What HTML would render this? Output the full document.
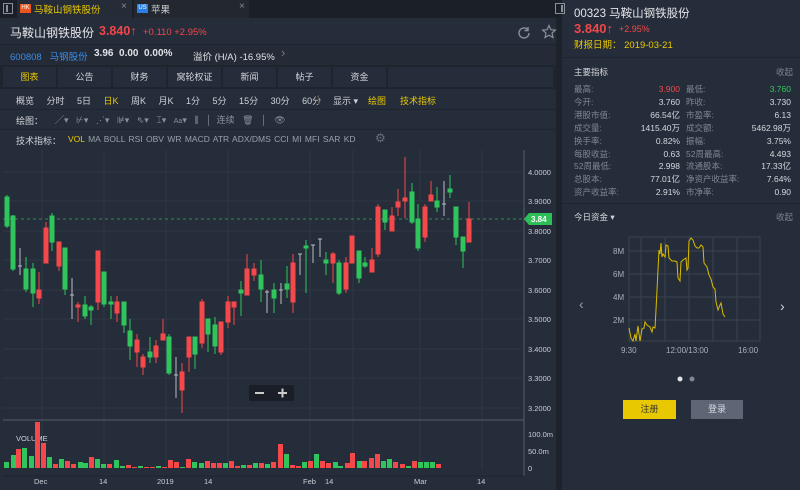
<!DOCTYPE html>
<html><head><meta charset="utf-8"><style>
*{margin:0;padding:0;box-sizing:border-box}
body{width:800px;height:490px;background:#1d222b;font-family:"Liberation Sans","Noto Sans CJK SC",sans-serif;color:#c8ccd4;position:relative;overflow:hidden;font-size:9px}
.a{position:absolute;white-space:nowrap}
.y{color:#e8c800}
.r{color:#f0474a}
.g{color:#34c85a}
.nav div{position:absolute;top:67px;height:20px;background:#262d3a;line-height:20px;text-align:center;font-size:9px;color:#d0d4da}
.rt{font-size:8.5px;color:#7e8593}
.rv{font-size:8.5px;color:#d4d8de;text-align:right}
</style></head><body>
<!-- tab bar -->
<div class="a" style="left:0;top:0;width:800px;height:18px;background:#1b1f27"></div>
<div class="a" style="left:3px;top:3px;width:10px;height:11px;border:1px solid #8a909a"></div>
<div class="a" style="left:6px;top:5px;width:2px;height:7px;background:#8a909a"></div>
<div class="a" style="left:17px;top:0;width:115px;height:18px;background:#262c37"></div>
<div class="a" style="left:20px;top:4px;width:11px;height:9px;background:#e8551e;font-size:6px;color:#fff;line-height:9px;text-align:center">HK</div>
<div class="a y" style="left:34px;top:2px;font-size:9.5px">马鞍山钢铁股份</div>
<div class="a" style="left:121px;top:1px;font-size:10px;color:#888">×</div>
<div class="a" style="left:134px;top:0;width:115px;height:18px;background:#222730"></div>
<div class="a" style="left:137px;top:4px;width:11px;height:9px;background:#2a7fe0;font-size:6px;color:#fff;line-height:9px;text-align:center">US</div>
<div class="a" style="left:151px;top:2px;font-size:9.5px;color:#ccc">苹果</div>
<div class="a" style="left:239px;top:1px;font-size:10px;color:#888">×</div>

<!-- left panel -->
<div class="a" style="left:0;top:18px;width:556px;height:472px;background:#262d3a"></div>
<div class="a" style="left:0;top:44px;width:556px;height:1px;background:#1f252f"></div>
<div class="a" style="left:10px;top:24px;font-size:12px;color:#e4e6ea">马鞍山钢铁股份</div>
<div class="a r" style="left:99px;top:24px;font-size:12.5px;font-weight:bold">3.840↑</div>
<div class="a r" style="left:143px;top:27px;font-size:9.5px">+0.110 +2.95%</div>
<svg class="a" style="left:516px;top:25px" width="16" height="16" viewBox="0 0 16 16"><path d="M13 8a5 5 0 1 1-1.5-3.6" fill="none" stroke="#8a909a" stroke-width="1.4"/><path d="M12 2v3.5H8.5" fill="none" stroke="#8a909a" stroke-width="1.4"/></svg>
<svg class="a" style="left:541px;top:24px" width="16" height="16" viewBox="0 0 16 16"><path d="M8 1.5l1.9 4.2 4.5.4-3.4 3 1 4.4L8 11.2 4 13.5l1-4.4-3.4-3 4.5-.4z" fill="none" stroke="#8a909a" stroke-width="1.2"/></svg>
<div class="a" style="left:0;top:45px;width:556px;height:20px;background:#242a36"></div>
<div class="a" style="left:10px;top:49px;font-size:9.5px;color:#3a8fe8">600808 &nbsp; 马钢股份</div>
<div class="a" style="left:94px;top:48px;font-size:10px;color:#e0e2e6;font-weight:bold">3.96 &nbsp;0.00 &nbsp;0.00%</div>
<div class="a" style="left:193px;top:49px;font-size:9.5px;color:#e0e2e6">溢价 (H/A) -16.95%</div>
<div class="a" style="left:281px;top:45px;font-size:13px;color:#777">›</div>
<div class="a" style="left:0;top:65px;width:556px;height:24px;background:#1f252f"></div>
<div class="nav">
<div style="left:3px;width:53px;color:#e8c800">图表</div>
<div style="left:58px;width:53px">公告</div>
<div style="left:113px;width:53px">财务</div>
<div style="left:168px;width:53px">窝轮权证</div>
<div style="left:223px;width:53px">新闻</div>
<div style="left:278px;width:53px">帖子</div>
<div style="left:333px;width:53px">资金</div>
<div style="left:388px;width:165px"></div>
</div>
<div class="a" style="left:16px;top:94px;font-size:9px;color:#d0d4da;word-spacing:0">概览 &nbsp; &nbsp; 分时 &nbsp; &nbsp; 5日 &nbsp; &nbsp; <span class="y">日K</span> &nbsp; &nbsp; 周K &nbsp; &nbsp; 月K &nbsp; &nbsp; 1分 &nbsp; &nbsp; 5分 &nbsp; &nbsp; 15分 &nbsp; &nbsp; 30分 &nbsp; &nbsp; 60分</div>
<div class="a" style="left:318px;top:95px;width:1px;height:10px;background:#555"></div>
<div class="a" style="left:333px;top:94px;font-size:9px;color:#d0d4da">显示 ▾</div>
<div class="a y" style="left:368px;top:94px;font-size:9px">绘图</div>
<div class="a y" style="left:400px;top:94px;font-size:9px">技术指标</div>
<div class="a" style="left:0;top:109px;width:556px;height:1px;background:#1f252f"></div>
<div class="a" style="left:16px;top:114px;font-size:9px;color:#d0d4da">绘图：</div>
<div class="a" style="left:55px;top:113px;font-size:9px;color:#8a909a">╱▾ &nbsp; ⊬▾ &nbsp; ⋰▾ &nbsp; ⊯▾ &nbsp; ⇖▾ &nbsp; ⌶▾ &nbsp; <span style="font-size:7px">Aa</span>▾ &nbsp; ⫼ &nbsp; │ &nbsp;连续 &nbsp; 🗑 &nbsp; │ &nbsp; 👁</div>
<div class="a" style="left:0;top:129px;width:556px;height:1px;background:#1f252f"></div>
<div class="a" style="left:16px;top:134px;font-size:9px;color:#d0d4da">技术指标：</div>
<div class="a" style="left:68px;top:134px;font-size:8.5px;color:#9aa0aa;word-spacing:1px"><span class="y">VOL</span> MA BOLL RSI OBV WR MACD ATR ADX/DMS CCI MI MFI SAR KD</div>
<div class="a" style="left:375px;top:131px;font-size:12px;color:#6a707a">⚙</div>

<!-- chart -->
<svg class="a" style="left:0;top:0" width="556" height="490">
<g stroke="#2e3644" stroke-width="1">
<line x1="3" y1="172" x2="522" y2="172"/><line x1="3" y1="201" x2="522" y2="201"/><line x1="3" y1="231" x2="522" y2="231"/><line x1="3" y1="260" x2="522" y2="260"/><line x1="3" y1="290" x2="522" y2="290"/><line x1="3" y1="319" x2="522" y2="319"/><line x1="3" y1="349" x2="522" y2="349"/><line x1="3" y1="378" x2="522" y2="378"/><line x1="3" y1="408" x2="522" y2="408"/>
<line x1="42" y1="150" x2="42" y2="470"/><line x1="104" y1="150" x2="104" y2="470"/><line x1="166" y1="150" x2="166" y2="470"/><line x1="228" y1="150" x2="228" y2="470"/><line x1="310" y1="150" x2="310" y2="470"/><line x1="353" y1="150" x2="353" y2="470"/><line x1="420" y1="150" x2="420" y2="470"/><line x1="482" y1="150" x2="482" y2="470"/>
</g>
<line x1="3" y1="420" x2="524" y2="420" stroke="#565d6a"/>
<line x1="524" y1="150" x2="524" y2="476" stroke="#565d6a"/>
<line x1="3" y1="476" x2="524" y2="476" stroke="#1f252f"/>
<line x1="3" y1="219" x2="522" y2="219" stroke="#2e8c48" stroke-dasharray="3,3"/>
<g font-size="7.5" fill="#c8ccd4" font-family="Liberation Sans">
<text x="528" y="175">4.0000</text><text x="528" y="204">3.9000</text><text x="528" y="234">3.8000</text><text x="528" y="263">3.7000</text><text x="528" y="293">3.6000</text><text x="528" y="322">3.5000</text><text x="528" y="352">3.4000</text><text x="528" y="381">3.3000</text><text x="528" y="411">3.2000</text>
<text x="528" y="437">100.0m</text><text x="528" y="454">50.0m</text><text x="528" y="471">0</text>
<text x="34" y="484">Dec</text><text x="99" y="484">14</text><text x="157" y="484">2019</text><text x="204" y="484">14</text><text x="303" y="484">Feb</text><text x="325" y="484">14</text><text x="414" y="484">Mar</text><text x="477" y="484">14</text>
</g>
<path d="M524 219l5-6h23v12h-23z" fill="#2fbf58"/>
<text x="531" y="222" font-size="8" fill="#fff" font-weight="bold" font-family="Liberation Sans">3.84</text>
<rect x="249" y="385" width="45" height="16" rx="2" fill="#1a1e26"/>
<rect x="255" y="392" width="9" height="2" fill="#ccc"/><rect x="278" y="392" width="9" height="2" fill="#ccc"/><rect x="281.5" y="388.5" width="2" height="9" fill="#ccc"/>
<text x="16" y="441" font-size="7.5" fill="#d0d4da" font-family="Liberation Sans">VOLUME</text>
<g fill="#2fc55c" stroke="#2fc55c" stroke-width="1">
<line x1="7" y1="195" x2="7" y2="228"/><rect x="5" y="197" width="4" height="29"/>
<line x1="13" y1="215" x2="13" y2="271"/><rect x="11" y="216" width="4" height="53"/>
<line x1="26" y1="257" x2="26" y2="292"/><rect x="24" y="269" width="4" height="20"/>
<line x1="33" y1="263" x2="33" y2="307"/><rect x="31" y="269" width="4" height="24"/>
<line x1="52" y1="213" x2="52" y2="251"/><rect x="50" y="216" width="4" height="26"/>
<line x1="65" y1="248" x2="65" y2="295"/><rect x="63" y="248" width="4" height="41"/>
<line x1="85" y1="296" x2="85" y2="319"/><rect x="83" y="305" width="4" height="11"/>
<line x1="91" y1="305" x2="91" y2="325"/><rect x="89" y="307" width="4" height="3"/>
<line x1="104" y1="272" x2="104" y2="307"/><rect x="102" y="272" width="4" height="32"/>
<line x1="111" y1="296" x2="111" y2="319"/><rect x="109" y="302" width="4" height="2"/>
<line x1="124" y1="302" x2="124" y2="333"/><rect x="122" y="302" width="4" height="23"/>
<line x1="130" y1="319" x2="130" y2="360"/><rect x="128" y="331" width="4" height="15"/>
<line x1="150" y1="337" x2="150" y2="363"/><rect x="148" y="352" width="4" height="5"/>
<line x1="169" y1="334" x2="169" y2="375"/><rect x="167" y="337" width="4" height="36"/>
<line x1="195" y1="337" x2="195" y2="369"/><rect x="193" y="337" width="4" height="17"/>
<line x1="208" y1="319" x2="208" y2="352"/><rect x="206" y="319" width="4" height="15"/>
<line x1="215" y1="317" x2="215" y2="354"/><rect x="213" y="325" width="4" height="21"/>
<line x1="241" y1="281" x2="241" y2="316"/><rect x="239" y="290" width="4" height="3"/>
<line x1="261" y1="260" x2="261" y2="302"/><rect x="259" y="275" width="4" height="14"/>
<line x1="274" y1="283" x2="274" y2="313"/><rect x="272" y="290" width="4" height="8"/>
<line x1="287" y1="266" x2="287" y2="298"/><rect x="285" y="284" width="4" height="5"/>
<line x1="306" y1="240" x2="306" y2="293"/><rect x="304" y="246" width="4" height="2"/>
<line x1="326" y1="252" x2="326" y2="275"/><rect x="324" y="260" width="4" height="3"/>
<line x1="339" y1="260" x2="339" y2="295"/><rect x="337" y="263" width="4" height="30"/>
<line x1="359" y1="251" x2="359" y2="283"/><rect x="357" y="251" width="4" height="27"/>
<line x1="365" y1="257" x2="365" y2="268"/><rect x="363" y="263" width="4" height="3"/>
<line x1="385" y1="210" x2="385" y2="230"/><rect x="383" y="210" width="4" height="12"/>
<line x1="412" y1="183" x2="412" y2="224"/><rect x="410" y="192" width="4" height="30"/>
<line x1="418" y1="204" x2="418" y2="251"/><rect x="416" y="219" width="4" height="29"/>
<line x1="437" y1="187" x2="437" y2="212"/><rect x="435" y="201" width="4" height="6"/>
<line x1="450" y1="175" x2="450" y2="198"/><rect x="448" y="189" width="4" height="3"/>
<line x1="456" y1="207" x2="456" y2="245"/><rect x="454" y="207" width="4" height="30"/>
<line x1="463" y1="237" x2="463" y2="268"/><rect x="461" y="237" width="4" height="14"/>
</g>
<g fill="#f5484a" stroke="#f5484a" stroke-width="1">
<line x1="39" y1="272" x2="39" y2="304"/><rect x="37" y="290" width="4" height="8"/>
<line x1="46" y1="222" x2="46" y2="263"/><rect x="44" y="228" width="4" height="35"/>
<line x1="59" y1="242" x2="59" y2="271"/><rect x="57" y="242" width="4" height="24"/>
<line x1="78" y1="302" x2="78" y2="322"/><rect x="76" y="305" width="4" height="2"/>
<line x1="98" y1="251" x2="98" y2="310"/><rect x="96" y="251" width="4" height="51"/>
<line x1="117" y1="296" x2="117" y2="322"/><rect x="115" y="302" width="4" height="11"/>
<line x1="137" y1="334" x2="137" y2="367"/><rect x="135" y="340" width="4" height="12"/>
<line x1="143" y1="354" x2="143" y2="375"/><rect x="141" y="357" width="4" height="10"/>
<line x1="156" y1="340" x2="156" y2="363"/><rect x="154" y="346" width="4" height="11"/>
<line x1="163" y1="319" x2="163" y2="340"/><rect x="161" y="334" width="4" height="6"/>
<line x1="182" y1="363" x2="182" y2="413"/><rect x="180" y="372" width="4" height="18"/>
<line x1="189" y1="337" x2="189" y2="372"/><rect x="187" y="337" width="4" height="20"/>
<line x1="202" y1="299" x2="202" y2="348"/><rect x="200" y="302" width="4" height="41"/>
<line x1="221" y1="322" x2="221" y2="355"/><rect x="219" y="322" width="4" height="30"/>
<line x1="228" y1="296" x2="228" y2="328"/><rect x="226" y="302" width="4" height="20"/>
<line x1="234" y1="302" x2="234" y2="325"/><rect x="232" y="302" width="4" height="5"/>
<line x1="247" y1="254" x2="247" y2="295"/><rect x="245" y="269" width="4" height="26"/>
<line x1="254" y1="263" x2="254" y2="281"/><rect x="252" y="269" width="4" height="6"/>
<line x1="293" y1="254" x2="293" y2="313"/><rect x="291" y="263" width="4" height="39"/>
<line x1="333" y1="252" x2="333" y2="283"/><rect x="331" y="254" width="4" height="9"/>
<line x1="346" y1="257" x2="346" y2="293"/><rect x="344" y="263" width="4" height="26"/>
<line x1="352" y1="236" x2="352" y2="263"/><rect x="350" y="236" width="4" height="27"/>
<line x1="372" y1="248" x2="372" y2="272"/><rect x="370" y="260" width="4" height="12"/>
<line x1="378" y1="204" x2="378" y2="257"/><rect x="376" y="207" width="4" height="47"/>
<line x1="392" y1="207" x2="392" y2="231"/><rect x="390" y="216" width="4" height="15"/>
<line x1="398" y1="189" x2="398" y2="216"/><rect x="396" y="202" width="4" height="5"/>
<line x1="405" y1="157" x2="405" y2="218"/><rect x="403" y="198" width="4" height="3"/>
<line x1="425" y1="204" x2="425" y2="242"/><rect x="423" y="207" width="4" height="30"/>
<line x1="431" y1="181" x2="431" y2="201"/><rect x="429" y="195" width="4" height="6"/>
<line x1="469" y1="202" x2="469" y2="242"/><rect x="467" y="219" width="4" height="23"/>
</g>
<g stroke="#b8bcc4" stroke-width="1">
<line x1="20" y1="248" x2="20" y2="275"/><line x1="18" y1="266" x2="22" y2="266"/>
<line x1="72" y1="278" x2="72" y2="319"/><line x1="70" y1="295" x2="74" y2="295"/>
<line x1="176" y1="357" x2="176" y2="398"/><line x1="174" y1="375" x2="178" y2="375"/>
<line x1="267" y1="290" x2="267" y2="313"/><line x1="265" y1="292" x2="269" y2="292"/>
<line x1="281" y1="283" x2="281" y2="304"/><line x1="279" y1="290" x2="283" y2="290"/>
<line x1="300" y1="254" x2="300" y2="275"/><line x1="298" y1="254" x2="302" y2="254"/>
<line x1="313" y1="245" x2="313" y2="263"/><line x1="311" y1="245" x2="315" y2="245"/>
<line x1="320" y1="239" x2="320" y2="257"/><line x1="318" y1="239" x2="322" y2="239"/>
<line x1="444" y1="181" x2="444" y2="216"/><line x1="442" y1="204" x2="446" y2="204"/>
</g>
<g fill="#2fc55c">
<rect x="4" y="462" width="5" height="6"/><rect x="11" y="455" width="5" height="13"/><rect x="22" y="448" width="5" height="20"/><rect x="29" y="456" width="5" height="12"/><rect x="47" y="457" width="5" height="11"/><rect x="59" y="459" width="5" height="9"/><rect x="78" y="462" width="5" height="6"/><rect x="83" y="463" width="5" height="5"/><rect x="95" y="459" width="5" height="9"/><rect x="101" y="464" width="5" height="4"/><rect x="114" y="460" width="5" height="8"/><rect x="120" y="466" width="5" height="2"/><rect x="138" y="466" width="5" height="2"/><rect x="156" y="466" width="5" height="2"/><rect x="180" y="467" width="5" height="1"/><rect x="192" y="462" width="5" height="6"/><rect x="199" y="463" width="5" height="5"/><rect x="223" y="463" width="5" height="5"/><rect x="241" y="465" width="5" height="3"/><rect x="253" y="463" width="5" height="5"/><rect x="265" y="464" width="5" height="4"/><rect x="284" y="454" width="5" height="14"/><rect x="302" y="462" width="5" height="6"/><rect x="314" y="454" width="5" height="14"/><rect x="333" y="462" width="5" height="6"/><rect x="338" y="466" width="5" height="2"/><rect x="357" y="461" width="5" height="7"/><rect x="381" y="461" width="5" height="7"/><rect x="387" y="459" width="5" height="9"/><rect x="406" y="466" width="5" height="2"/><rect x="418" y="462" width="5" height="6"/><rect x="424" y="462" width="5" height="6"/><rect x="430" y="462" width="5" height="6"/>
</g>
<g fill="#f5484a">
<rect x="16" y="449" width="5" height="19"/><rect x="35" y="422" width="5" height="46"/><rect x="41" y="443" width="5" height="25"/><rect x="53" y="464" width="5" height="4"/><rect x="65" y="461" width="5" height="7"/><rect x="71" y="464" width="5" height="4"/><rect x="89" y="457" width="5" height="11"/><rect x="107" y="464" width="5" height="4"/><rect x="126" y="465" width="5" height="3"/><rect x="132" y="467" width="5" height="1"/><rect x="144" y="467" width="5" height="1"/><rect x="150" y="467" width="5" height="1"/><rect x="162" y="467" width="5" height="1"/><rect x="168" y="460" width="5" height="8"/><rect x="174" y="462" width="5" height="6"/><rect x="186" y="459" width="5" height="9"/><rect x="205" y="461" width="5" height="7"/><rect x="211" y="463" width="5" height="5"/><rect x="217" y="463" width="5" height="5"/><rect x="229" y="461" width="5" height="7"/><rect x="235" y="466" width="5" height="2"/><rect x="247" y="465" width="5" height="3"/><rect x="259" y="463" width="5" height="5"/><rect x="271" y="462" width="5" height="6"/><rect x="278" y="444" width="5" height="24"/><rect x="290" y="465" width="5" height="3"/><rect x="296" y="466" width="5" height="2"/><rect x="308" y="461" width="5" height="7"/><rect x="320" y="461" width="5" height="7"/><rect x="326" y="463" width="5" height="5"/><rect x="345" y="463" width="5" height="5"/><rect x="350" y="453" width="5" height="15"/><rect x="362" y="461" width="5" height="7"/><rect x="369" y="458" width="5" height="10"/><rect x="375" y="454" width="5" height="14"/><rect x="393" y="462" width="5" height="6"/><rect x="400" y="464" width="5" height="4"/><rect x="412" y="461" width="5" height="7"/><rect x="436" y="464" width="5" height="4"/>
</g>
</svg>

<!-- right panel -->
<div class="a" style="left:562px;top:0;width:238px;height:490px;background:#262d3a"></div>
<div class="a" style="left:555px;top:3px;width:10px;height:11px;border:1px solid #8a909a"></div>
<div class="a" style="left:561px;top:5px;width:2px;height:7px;background:#8a909a"></div>
<div class="a" style="left:574px;top:5px;font-size:11.5px;color:#e4e6ea">00323 马鞍山钢铁股份</div>
<div class="a r" style="left:574px;top:21px;font-size:13px;font-weight:bold">3.840↑</div>
<div class="a r" style="left:619px;top:24px;font-size:9px">+2.95%</div>
<div class="a y" style="left:574px;top:37px;font-size:9.5px">财报日期： 2019-03-21</div>
<div class="a" style="left:562px;top:57px;width:238px;height:1px;background:#1f252f"></div>
<div class="a" style="left:574px;top:66px;font-size:8.5px;color:#d4d8de">主要指标</div>
<div class="a rt" style="left:776px;top:66px">收起</div>
<div class="a rt" style="left:574px;top:83px;line-height:12.9px">最高:<br>今开:<br>港股市值:<br>成交量:<br>换手率:<br>每股收益:<br>52周最低:<br>总股本:<br>资产收益率:</div>
<div class="a rv" style="left:620px;top:83px;width:60px;line-height:12.9px"><span class="r">3.900</span><br>3.760<br>66.54亿<br>1415.40万<br>0.82%<br>0.63<br>2.998<br>77.01亿<br>2.91%</div>
<div class="a rt" style="left:686px;top:83px;line-height:12.9px">最低:<br>昨收:<br>市盈率:<br>成交额:<br>振幅:<br>52周最高:<br>流通股本:<br>净资产收益率:<br>市净率:</div>
<div class="a rv" style="left:730px;top:83px;width:61px;line-height:12.9px"><span class="g">3.760</span><br>3.730<br>6.13<br>5462.98万<br>3.75%<br>4.493<br>17.33亿<br>7.64%<br>0.90</div>
<div class="a" style="left:562px;top:203px;width:238px;height:1px;background:#1f252f"></div>
<div class="a" style="left:574px;top:211px;font-size:8.5px;color:#d4d8de">今日资金 ▾</div>
<div class="a rt" style="left:776px;top:211px">收起</div>
<svg class="a" style="left:562px;top:230px" width="238" height="200">
<g stroke="#3a4251" stroke-width="1" fill="none">
<rect x="67" y="7" width="131" height="104"/>
<line x1="67" y1="21" x2="198" y2="21"/><line x1="67" y1="44" x2="198" y2="44"/><line x1="67" y1="67" x2="198" y2="67"/><line x1="67" y1="90" x2="198" y2="90"/>
<line x1="79" y1="7" x2="79" y2="111"/><line x1="103" y1="7" x2="103" y2="111"/><line x1="127" y1="7" x2="127" y2="111"/><line x1="151" y1="7" x2="151" y2="111"/><line x1="175" y1="7" x2="175" y2="111"/>
</g>
<g font-size="8" fill="#aab0ba" font-family="Liberation Sans">
<text x="51" y="24">8M</text><text x="51" y="47">6M</text><text x="51" y="70">4M</text><text x="51" y="93">2M</text>
<text x="59" y="123">9:30</text><text x="104" y="123">12:00/13:00</text><text x="176" y="123">16:00</text>
</g>
<path d="M67 98 L69 108 L71 111 L73 104 L74 111 L76 96 L77 104 L78 111 L80 99 L82 98 L83 92 L85 95 L88 97 L90 102 L91 97 L93 98 L94 80 L96 40 L97 20 L98 24 L99 13 L100 27 L101 24 L103 27 L104 15 L106 16 L107 28 L110 31 L113 31 L115 32 L116 48 L118 51 L119 32 L121 30 L124 28 L125 40 L126 38 L127 11 L129 8 L131 10 L133 16 L135 18 L137 18 L139 15 L141 17 L142 33 L145 37 L147 45 L149 49 L151 57 L153 59 L154 72 L156 80 L158 75 L159 73 L161 84 L163 87" fill="none" stroke="#d9bb00" stroke-width="1"/>
<text x="17" y="79" font-size="14" fill="#9aa0aa" font-family="Liberation Sans">‹</text>
<text x="218" y="81" font-size="14" fill="#d4d8de" font-family="Liberation Sans">›</text>
<circle cx="118" cy="149" r="2.5" fill="#e0e2e6"/><circle cx="130" cy="149" r="2.5" fill="#7e8593"/>
</svg>
<div class="a" style="left:623px;top:400px;width:53px;height:19px;background:#e8c800;color:#333;font-size:9px;text-align:center;line-height:19px">注册</div>
<div class="a" style="left:691px;top:400px;width:52px;height:19px;background:#5e6675;color:#d8dce2;font-size:9px;text-align:center;line-height:19px">登录</div>
</body></html>
